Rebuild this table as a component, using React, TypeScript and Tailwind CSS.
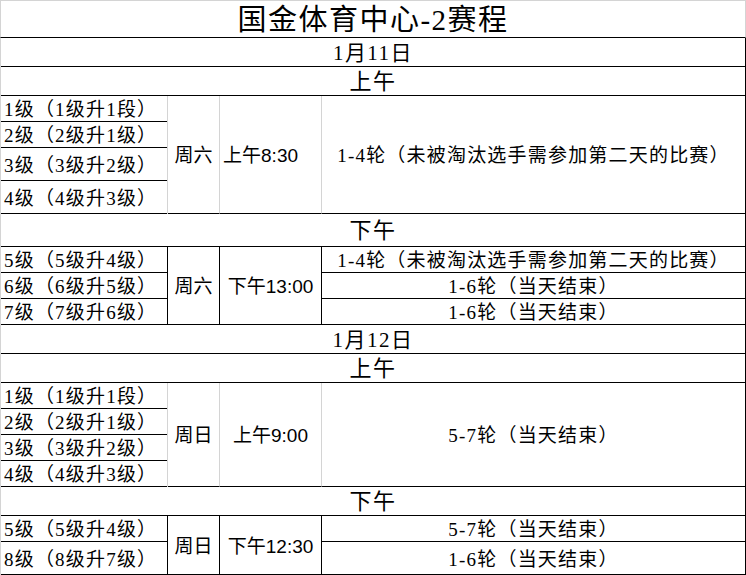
import React from "react";

type Row = { text: string; h: string };

interface BlockProps {
  levels: Row[];
  day: string;
  time: string;
  timeLeft?: boolean;
  rounds: Row[];
  line: string;
}

const Header = ({ text, h, size }: { text: string; h: string; size: string }) => (
  <div className={`flex items-center justify-center border-b border-black pt-[2px] leading-none tracking-[1.5px] ${h} ${size}`}>
    {text}
  </div>
);

const Block = ({ levels, day, time, timeLeft, rounds, line }: BlockProps) => {
  return (
    <div className="flex">
      <div className={`flex w-[167px] flex-col border-r ${line}`}>
        {levels.map((r) => (
          <div key={r.text} className={`flex items-center border-b border-b-black pl-[3px] pt-[2px] leading-none tracking-[1.2px] ${r.h}`}>
            {r.text}
          </div>
        ))}
      </div>
      <div className={`flex w-[52px] items-center justify-center border-r border-b border-b-black pt-[2px] leading-none ${line}`}>
        {day}
      </div>
      <div
        className={`flex w-[102px] items-center border-r border-b border-b-black pt-[2px] leading-none ${line} ${
          timeLeft ? "justify-start pl-[3px]" : "justify-center"
        }`}
      >
        {[...time].map((c, i) =>
          /[0-9:]/.test(c) ? (
            <span key={i} className="font-['Liberation_Sans','Noto_Sans_CJK_SC',sans-serif]">
              {c}
            </span>
          ) : (
            <span key={i}>{c}</span>
          )
        )}
      </div>
      <div className="flex flex-1 flex-col">
        {rounds.map((r, i) => (
          <div key={i} className={`flex items-center justify-center border-b border-black pt-[2px] leading-none tracking-[1.2px] ${r.h}`}>
            {r.text}
          </div>
        ))}
      </div>
    </div>
  );
};

const LONG = "1-4轮（未被淘汰选手需参加第二天的比赛）";
const END16 = "1-6轮（当天结束）";
const END57 = "5-7轮（当天结束）";

export default function App() {
  return (
    <div className="h-[575px] w-[746px] overflow-hidden bg-white font-['Liberation_Serif','Noto_Sans_CJK_SC',serif] text-[19px] text-black">
      <div className="flex h-[38px] items-center justify-center border-x border-t border-x-[#d4d4d4] border-t-[#d4d4d4] border-b border-b-black pt-[3px] text-[29px] leading-none tracking-[1.5px]">
        国金体育中心-2赛程
      </div>
      <div className="border-l border-r border-l-[#d4d4d4] border-r-black">
        <Header text="1月11日" h="h-[29px]" size="text-[21px]" />
        <Header text="上午" h="h-[29px]" size="text-[22px]" />
        <Block
          line="border-r-[#d4d4d4]"
          levels={[
            { text: "1级（1级升1段）", h: "h-[26px]" },
            { text: "2级（2级升1级）", h: "h-[26px]" },
            { text: "3级（3级升2级）", h: "h-[33px]" },
            { text: "4级（4级升3级）", h: "h-[33px]" },
          ]}
          day="周六"
          time="上午8:30"
          timeLeft
          rounds={[{ text: LONG, h: "h-[118px]" }]}
        />
        <Header text="下午" h="h-[33px]" size="text-[22px]" />
        <Block
          line="border-r-black"
          levels={[
            { text: "5级（5级升4级）", h: "h-[26px]" },
            { text: "6级（6级升5级）", h: "h-[26px]" },
            { text: "7级（7级升6级）", h: "h-[26px]" },
          ]}
          day="周六"
          time="下午13:00"
          rounds={[
            { text: LONG, h: "h-[26px]" },
            { text: END16, h: "h-[26px]" },
            { text: END16, h: "h-[26px]" },
          ]}
        />
        <Header text="1月12日" h="h-[29px]" size="text-[21px]" />
        <Header text="上午" h="h-[29px]" size="text-[22px]" />
        <Block
          line="border-r-[#d4d4d4]"
          levels={[
            { text: "1级（1级升1段）", h: "h-[26px]" },
            { text: "2级（2级升1级）", h: "h-[26px]" },
            { text: "3级（3级升2级）", h: "h-[26px]" },
            { text: "4级（4级升3级）", h: "h-[26px]" },
          ]}
          day="周日"
          time="上午9:00"
          rounds={[{ text: END57, h: "h-[104px]" }]}
        />
        <Header text="下午" h="h-[29px]" size="text-[22px]" />
        <Block
          line="border-r-black"
          levels={[
            { text: "5级（5级升4级）", h: "h-[26px]" },
            { text: "8级（8级升7级）", h: "h-[33px]" },
          ]}
          day="周日"
          time="下午12:30"
          rounds={[
            { text: END57, h: "h-[26px]" },
            { text: END16, h: "h-[33px]" },
          ]}
        />
      </div>
    </div>
  );
}
